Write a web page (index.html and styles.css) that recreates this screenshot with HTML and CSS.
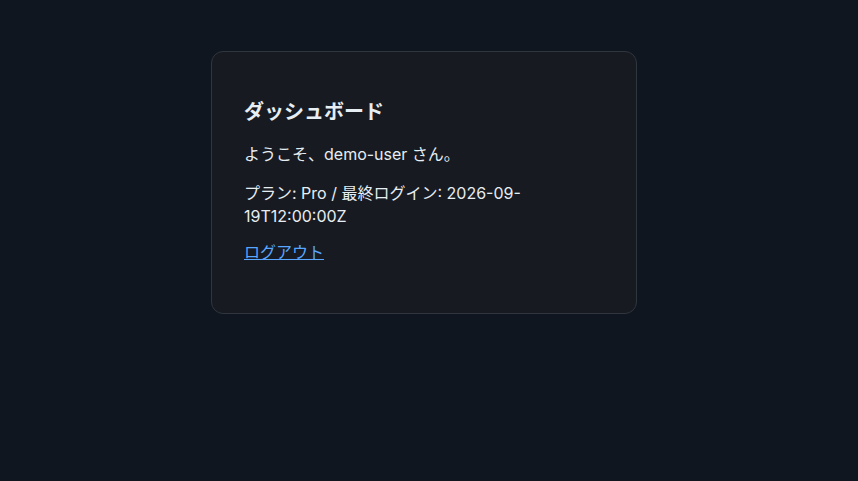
FILE: index.html
```html
<!DOCTYPE html>
<html lang="ja">
<head>
    <meta charset="UTF-8">
    <meta name="viewport" content="width=device-width, initial-scale=1.0">
    <title>ダッシュボード</title>
    <link rel="stylesheet" href="styles.css">
</head>
<body>
    <main class="page">
        <section class="card">
            <h1>ダッシュボード</h1>
            <p>ようこそ、demo-user さん。</p>
            <p class="meta">プラン: Pro / 最終ログイン: 2026-09-19T12:00:00Z</p>
            <p class="actions"><a href="#" class="logout">ログアウト</a></p>
        </section>
    </main>
</body>
</html>
```

FILE: styles.css
```css
body {
    margin: 0;
    background: #0f1620;
    color: #e6edf3;
    font-family: Inter, "Noto Sans CJK JP", sans-serif;
    font-size: 16px;
    line-height: 1.4;
}

.page {
    display: flex;
    justify-content: center;
    padding: 51px 10px 0 0;
}

.card {
    width: 360px;
    padding: 32px;
    background: #171a21;
    border: 1px solid #30363d;
    border-radius: 12px;
}

.card h1 {
    margin: 13px 0 16px;
    font-size: 20px;
    line-height: 1.5;
}

.card p {
    margin: 16px 0;
}

.card .meta {
    margin: 17px 0 14px;
}

.card .actions {
    margin: 14px 0 17px;
}

.logout {
    color: #58a6ff;
}
```
